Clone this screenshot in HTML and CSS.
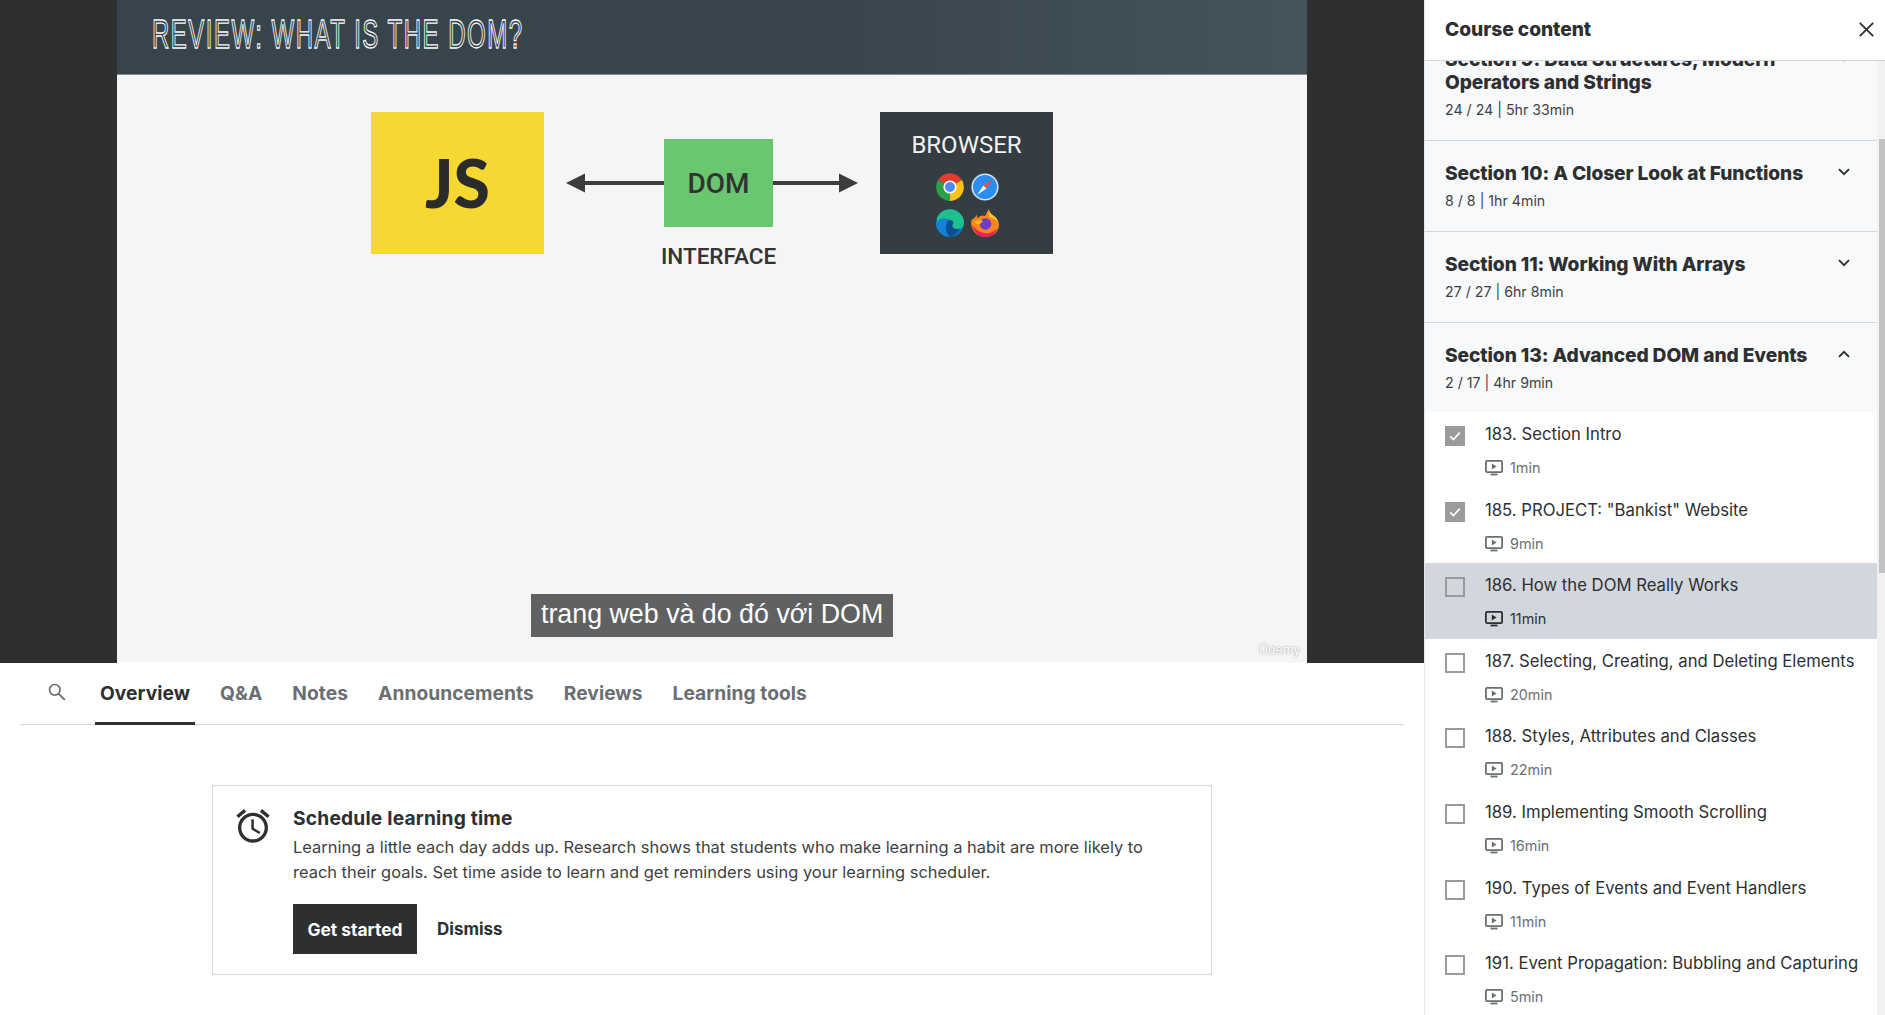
FILE: index.html
```html
<!DOCTYPE html>
<html lang="en">
<head>
<meta charset="utf-8">
<title>Course player</title>
<link rel="stylesheet" href="styles.css">
</head>
<body>
<svg class="defs" width="0" height="0" aria-hidden="true">
  <symbol id="play" viewBox="0 0 18 16">
    <rect x="0.9" y="0.9" width="16.2" height="11.2" rx="1.2" fill="none" stroke="currentColor" stroke-width="1.8"/>
    <path d="M6.8 3.6v5.8l4.8-2.9z" fill="currentColor"/>
    <rect x="5.5" y="13.6" width="7" height="1.8" fill="currentColor"/>
  </symbol>
  <symbol id="tick" viewBox="0 0 20 20">
    <path d="M5.2 10.4l3.2 3.2 6.4-7" fill="none" stroke="#fff" stroke-width="1.6"/>
  </symbol>
  <symbol id="down" viewBox="0 0 12 8">
    <path d="M1 1.2l5 5 5-5" fill="none" stroke="currentColor" stroke-width="1.9"/>
  </symbol>
</svg>

<div class="app">
  <main class="main">
    <section class="video">
      <div class="slide">
        <header class="slide-head"><h1 class="slide-title">REVIEW: WHAT IS THE DOM?</h1></header>
        <div class="diagram">
          <div class="js-box">JS</div>
          <svg class="arrow arrow-left" viewBox="0 0 98 20" width="98" height="20"><path d="M0 10L19 0.5v19z" fill="#3d3d3d"/><rect x="18" y="8" width="80" height="4" fill="#3d3d3d"/></svg>
          <div class="dom-col">
            <div class="dom-box">DOM</div>
            <div class="dom-label">INTERFACE</div>
          </div>
          <svg class="arrow arrow-right" viewBox="0 0 85 20" width="85" height="20"><rect x="0" y="8" width="68" height="4" fill="#3d3d3d"/><path d="M85 10L66 0.5v19z" fill="#3d3d3d"/></svg>
          <div class="browser-box">
            <div class="browser-label">BROWSER</div>
            <div class="browser-icons">
              <svg viewBox="0 0 28 28" width="28" height="28" aria-hidden="true">
                <path d="M14 14L2 7A14 14 0 0 1 26 7z" fill="#e33b2e"/>
                <path d="M14 14L26 7A14 14 0 0 1 14 28z" fill="#fbc116"/>
                <path d="M14 14L14 28A14 14 0 0 1 2 7z" fill="#2c9f47"/>
                <circle cx="14" cy="14" r="6.6" fill="#fff"/><circle cx="14" cy="14" r="5" fill="#4c8bf5"/>
              </svg>
              <svg viewBox="0 0 28 28" width="28" height="28" aria-hidden="true">
                <circle cx="14" cy="14" r="13.6" fill="#cfe3f3"/><circle cx="14" cy="14" r="12" fill="#2a8df0"/>
                <path d="M22 6l-9.6 6.4 3.2 3.2z" fill="#ee4b40"/><path d="M6 22l9.6-6.4-3.2-3.2z" fill="#f4f6f8"/>
              </svg>
              <svg viewBox="0 0 28 28" width="28" height="28" aria-hidden="true">
                <circle cx="14" cy="14" r="14" fill="#0f73c4"/>
                <path d="M1 9A14 14 0 0 1 28 14c0 4-3 6-6.500 6-3.500 0-5-1.500-5-3.500 0-4-3-7-7.500-6.500C6 10.400 3 11 1 14z" fill="#1fc08c"/>
                <path d="M10 17c0-4 3-6.500 6-5.500 1.500.5 1.500 2.500.5 4-1 2 .5 4.500 4 4.500 1 0 2-.2 3-.6A14 14 0 0 1 14 28c-3 0-4-7-4-11z" fill="#0b4d92"/>
                <path d="M2 12c2-2.500 5-3 7-2.500 4 .5 2 3.500 1 7.500-.5 3 .5 8 4 11C6 28 0 21 0 14z" fill="#1481d2"/>
              </svg>
              <svg viewBox="0 0 28 28" width="28" height="28" aria-hidden="true">
                <path d="M14 28A14 14 0 0 1 .5 11L4 8.500l1.500-3 1 4C9 6 12 7 14 7c1-2 2-4 4-7 0 3 1 4 5 7 4 3.500 5 7 5 9 0 7-6 12-14 12z" fill="#f9861d"/>
                <path d="M1 16c2 8 8 12 13 12 7 0 11-4 13-9-4 4-9 6-14 5C8 23 4 20 1 16z" fill="#ea1f63"/>
                <path d="M18 0c0 3 1 4 5 7 3 2.500 4 5 4.500 7-2-3-5-5-9-6-1-3-1-5-.5-8z" fill="#fdc62b"/>
                <circle cx="14.500" cy="15" r="5.800" fill="#6e3fc4"/>
                <path d="M3 13c3-2 6-2 9-1l-3 3c-2 .5-4 0-6-2z" fill="#fdb52b"/>
              </svg>
            </div>
          </div>
        </div>
        <div class="caption">trang web và do đó với DOM</div>
        <div class="watermark">Ûdemy</div>
      </div>
    </section>

    <nav class="tabs">
      <button class="tab-search" aria-label="Search">
        <svg viewBox="0 0 20 20" width="20" height="20"><circle cx="7.800" cy="7.800" r="5.300" fill="none" stroke="currentColor" stroke-width="1.700"/><path d="M11.800 11.800l6 6" stroke="currentColor" stroke-width="1.900"/></svg>
      </button>
      <a class="tab tab-active">Overview</a>
      <a class="tab">Q&amp;A</a>
      <a class="tab">Notes</a>
      <a class="tab">Announcements</a>
      <a class="tab">Reviews</a>
      <a class="tab">Learning tools</a>
    </nav>

    <section class="card">
      <svg class="card-icon" viewBox="0 0 24 24" width="40" height="40" aria-hidden="true"><path d="M22 5.720l-4.600-3.860-1.290 1.530 4.600 3.860L22 5.720zM7.880 3.390L6.600 1.860 2 5.710l1.290 1.530 4.590-3.850zM12.500 8H11v6l4.750 2.850.75-1.230-4-2.370V8zM12 4c-4.970 0-9 4.030-9 9s4.030 9 9 9 9-4.030 9-9-4.030-9-9-9zm0 16c-3.870 0-7-3.130-7-7s3.130-7 7-7 7 3.130 7 7-3.130 7-7 7z" fill="#2d2f31"/></svg>
      <div class="card-body">
        <h2 class="card-title">Schedule learning time</h2>
        <p class="card-text">Learning a little each day adds up. Research shows that students who make learning a habit are more likely to reach their goals. Set time aside to learn and get reminders using your learning scheduler.</p>
        <div class="card-actions">
          <button class="btn-primary">Get started</button>
          <button class="btn-link">Dismiss</button>
        </div>
      </div>
    </section>
  </main>

  <aside class="sidebar">
    <header class="side-head">
      <span class="side-title">Course content</span>
      <svg class="close" viewBox="0 0 15 15" width="15" height="15" aria-label="Close"><path d="M0.800 0.800l13.400 13.400M14.200 0.800L0.800 14.200" stroke="#2d2f31" stroke-width="1.800"/></svg>
    </header>
    <div class="side-scroll">
      <div class="side-list">
        <div class="sec sec-first">
          <div class="sec-text"><div class="sec-title">Section 9: Data Structures, Modern Operators and Strings</div><div class="sec-meta">24 / 24 | 5hr 33min</div></div>
          <svg class="chev" width="12" height="8"><use href="#down"/></svg>
        </div>
        <div class="sec">
          <div class="sec-text"><div class="sec-title">Section 10: A Closer Look at Functions</div><div class="sec-meta">8 / 8 | 1hr 4min</div></div>
          <svg class="chev" width="12" height="8"><use href="#down"/></svg>
        </div>
        <div class="sec">
          <div class="sec-text"><div class="sec-title">Section 11: Working With Arrays</div><div class="sec-meta">27 / 27 | 6hr 8min</div></div>
          <svg class="chev" width="12" height="8"><use href="#down"/></svg>
        </div>
        <div class="sec sec-open">
          <div class="sec-text"><div class="sec-title">Section 13: Advanced DOM and Events</div><div class="sec-meta">2 / 17 | 4hr 9min</div></div>
          <svg class="chev chev-up" width="12" height="8"><use href="#down"/></svg>
        </div>

        <div class="item">
          <span class="box box-on"><svg width="20" height="20"><use href="#tick"/></svg></span>
          <div class="item-text"><div class="item-name">183. Section Intro</div><div class="item-dur"><svg width="18" height="16"><use href="#play"/></svg>1min</div></div>
        </div>
        <div class="item">
          <span class="box box-on"><svg width="20" height="20"><use href="#tick"/></svg></span>
          <div class="item-text"><div class="item-name">185. PROJECT: "Bankist" Website</div><div class="item-dur"><svg width="18" height="16"><use href="#play"/></svg>9min</div></div>
        </div>
        <div class="item item-current">
          <span class="box"></span>
          <div class="item-text"><div class="item-name">186. How the DOM Really Works</div><div class="item-dur"><svg width="18" height="16"><use href="#play"/></svg>11min</div></div>
        </div>
        <div class="item">
          <span class="box"></span>
          <div class="item-text"><div class="item-name">187. Selecting, Creating, and Deleting Elements</div><div class="item-dur"><svg width="18" height="16"><use href="#play"/></svg>20min</div></div>
        </div>
        <div class="item">
          <span class="box"></span>
          <div class="item-text"><div class="item-name">188. Styles, Attributes and Classes</div><div class="item-dur"><svg width="18" height="16"><use href="#play"/></svg>22min</div></div>
        </div>
        <div class="item">
          <span class="box"></span>
          <div class="item-text"><div class="item-name">189. Implementing Smooth Scrolling</div><div class="item-dur"><svg width="18" height="16"><use href="#play"/></svg>16min</div></div>
        </div>
        <div class="item">
          <span class="box"></span>
          <div class="item-text"><div class="item-name">190. Types of Events and Event Handlers</div><div class="item-dur"><svg width="18" height="16"><use href="#play"/></svg>11min</div></div>
        </div>
        <div class="item">
          <span class="box"></span>
          <div class="item-text"><div class="item-name">191. Event Propagation: Bubbling and Capturing</div><div class="item-dur"><svg width="18" height="16"><use href="#play"/></svg>5min</div></div>
        </div>
      </div>
      <div class="scrollbar"><div class="scroll-thumb"></div></div>
    </div>
  </aside>
</div>
</body>
</html>
```

FILE: styles.css
```css
* { box-sizing: border-box; }
html, body { margin: 0; height: 100%; overflow: hidden; background: #fff; }
body { font-family: "Inter", "Liberation Sans", sans-serif; color: #2d2f31; }
.defs { display: block; height: 0; }
button { font: inherit; border: 0; background: none; padding: 0; color: inherit; }
h1, h2, p { margin: 0; }

.app { display: flex; width: 1885px; height: 1015px; }
.main { width: 1424px; flex: none; }

.video { height: 663px; background: #2d2f31; display: flex; justify-content: center; }
.slide { position: relative; width: 1190px; height: 663px; background: #f5f5f5; border-bottom: 1px solid #fbfbfb; }
.slide-head { height: 75px; background: linear-gradient(90deg, #37444b, #38454c 60%, #45535d); border-bottom: 1px solid #7f8a90; padding: 14px 0 0 35px; overflow: hidden; }
.slide-title { font: 400 40px/40px "Liberation Sans", sans-serif; color: #37444b; letter-spacing: 2.5px; -webkit-text-stroke: 1.3px #f6f8f8; transform: scaleX(0.6); transform-origin: left top; white-space: nowrap; }

.diagram { display: flex; align-items: flex-start; padding: 37px 0 0 254px; }
.js-box { width: 173px; height: 142px; background: #f6d832; display: flex; align-items: center; justify-content: center; font: 900 66px/1 "Lato", sans-serif; color: #2b2b2b; }
.arrow { flex: none; margin-top: 61px; }
.arrow-left { margin-left: 22px; }
.arrow-right { margin-right: 22px; }
.dom-col { width: 109px; margin-top: 27px; display: flex; flex-direction: column; align-items: center; }
.dom-box { width: 109px; height: 88px; background: #68c76f; display: flex; align-items: center; justify-content: center; font: 500 28px/1 "Roboto", sans-serif; color: #333; padding-top: 1px; }
.dom-label { margin-top: 16px; font: 500 22.5px/26px "Roboto", sans-serif; color: #333; white-space: nowrap; }
.browser-box { width: 173px; height: 142px; background: #333d42; display: flex; flex-direction: column; align-items: center; padding-top: 19px; }
.browser-label { font: 400 24px/28px "Roboto", sans-serif; color: #f1f3f3; }
.browser-icons { display: grid; grid-template-columns: 28px 28px; gap: 8px 7px; margin: 14px 0 0 1px; }

.caption { position: absolute; left: 414px; top: 594px; height: 43px; padding: 0 10px; background: #606163; color: #fff; font: 400 26.8px/41px "Liberation Sans", sans-serif; white-space: nowrap; }
.watermark { position: absolute; right: 7px; top: 642px; font: 400 13px/16px "Liberation Sans", sans-serif; color: #fff; text-shadow: 0 0 2px #888; }

.tabs { display: flex; align-items: stretch; height: 62px; margin: 0 20px; border-bottom: 1px solid #d1d7dc; gap: 20px; }
.tab-search { width: 55px; color: #6a6f73; display: flex; align-items: center; justify-content: center; padding: 0 0 4px 18px; }
.tab { padding: 0 5px; font-weight: 700; font-size: 19.2px; letter-spacing: .05px; line-height: 60px; color: #6a6f73; white-space: nowrap; height: 62px; }
.tab-active { color: #2d2f31; border-bottom: 3px solid #2d2f31; }

.card { display: flex; width: 1000px; height: 190px; margin: 60px auto 0; border: 1px solid #d1d7dc; padding: 20px 20px 0 20px; }
.card-icon { flex: none; }
.card-body { margin-left: 20px; flex: 1; }
.card-title { font-size: 19.2px; letter-spacing: .2px; font-weight: 700; line-height: 25px; }
.card-text { font-size: 16.46px; line-height: 25px; color: #3e4143; width: 880px; margin-top: 4px; }
.card-actions { display: flex; align-items: center; margin-top: 19px; }
.btn-primary { width: 124px; height: 50px; background: #2d2f31; color: #fff; font-weight: 700; font-size: 17.4px; }
.btn-link { margin-left: 20px; font-weight: 700; font-size: 17px; }

.sidebar { width: 461px; flex: none; display: flex; flex-direction: column; border-left: 1px solid #e4e8eb; height: 1015px; }
.side-head { height: 61px; flex: none; display: flex; align-items: center; justify-content: space-between; padding: 0 11px 2px 20px; border-bottom: 1px solid #d1d7dc; background: #fff; position: relative; z-index: 1; }
.side-title { font-size: 19.2px; font-weight: 800; letter-spacing: -.05px; }
.side-scroll { flex: 1; display: flex; overflow: hidden; min-height: 0; }
.side-list { width: 452px; flex: none; }
.scrollbar { flex: 1; background: #f1f1f1; padding: 78px 0 0 2px; }
.scroll-thumb { height: 434px; background: #c1c1c1; }

.sec { display: flex; justify-content: space-between; padding: 21px 27px 0 20px; height: 91px; background: #f7f9fa; border-bottom: 1px solid #d1d7dc; }
.sec-first { height: 114px; margin-top: -34px; }
.sec-open { border-bottom: 0; height: 89px; }
.sec-text { width: 375px; }
.sec-title { font-size: 19.2px; letter-spacing: -.1px; font-weight: 800; line-height: 23px; }
.sec-meta { font-size: 14.2px; line-height: 20px; margin-top: 6px; color: #3e4143; }
.chev { margin: 6px 0 0 0; flex: none; color: #2d2f31; }
.chev-up { transform: rotate(180deg); }

.item { display: flex; height: 75.6px; padding: 14px 0 0 20px; background: #fff; }
.item-current { background: #d1d7dc; }
.box { width: 20px; height: 20px; flex: none; border: 2px solid #9b9b9b; }
.box svg { display: block; margin: -2px; }
.box-on { background: #9b9b9b; }
.item-text { margin: -2px 0 0 20px; }
.item-name { font-size: 16.7px; line-height: 20px; white-space: nowrap; color: #2d2f31; }
.item-dur { display: flex; align-items: center; gap: 7px; font-size: 14.4px; line-height: 20px; margin-top: 14px; color: #6a6f73; }
.item-current .item-dur { color: #2d2f31; }
```
